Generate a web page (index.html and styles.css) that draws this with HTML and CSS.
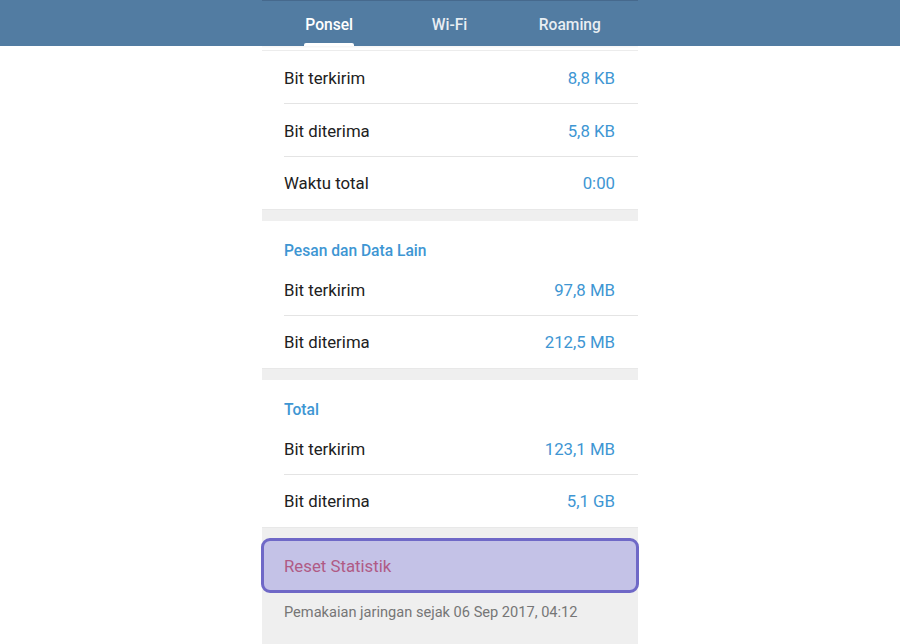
FILE: index.html
```html
<!DOCTYPE html>
<html lang="id">
<head>
<meta charset="utf-8">
<title>Penggunaan Data</title>
<link rel="stylesheet" href="styles.css">
</head>
<body>
<header class="topbar">
  <nav class="tabs">
    <div class="tab active"><span class="tab-label">Ponsel</span></div>
    <div class="tab"><span class="tab-label">Wi-Fi</span></div>
    <div class="tab"><span class="tab-label">Roaming</span></div>
  </nav>
</header>
<main class="column">
  <div class="top-edge"></div>
  <section class="group">
    <div class="row"><span class="label">Bit terkirim</span><span class="value">8,8 KB</span></div>
    <div class="row"><span class="label">Bit diterima</span><span class="value">5,8 KB</span></div>
    <div class="row last"><span class="label">Waktu total</span><span class="value">0:00</span></div>
  </section>
  <div class="gap"></div>
  <section class="group">
    <h2 class="group-title">Pesan dan Data Lain</h2>
    <div class="row"><span class="label">Bit terkirim</span><span class="value">97,8 MB</span></div>
    <div class="row last"><span class="label">Bit diterima</span><span class="value">212,5 MB</span></div>
  </section>
  <div class="gap"></div>
  <section class="group">
    <h2 class="group-title">Total</h2>
    <div class="row"><span class="label">Bit terkirim</span><span class="value">123,1 MB</span></div>
    <div class="row last"><span class="label">Bit diterima</span><span class="value">5,1 GB</span></div>
  </section>
  <section class="footer-area">
    <div class="reset">Reset Statistik</div>
    <p class="note">Pemakaian jaringan sejak 06 Sep 2017, 04:12</p>
  </section>
</main>
</body>
</html>
```
FILE: styles.css
```css
* { box-sizing: border-box; }
html, body { margin: 0; padding: 0; }
body {
  background: #ffffff;
  font-family: Roboto, "Noto Sans", "Liberation Sans", sans-serif;
  color: #212121;
}
.topbar {
  background: #527ca2;
  height: 46px;
}
.tabs {
  width: 376px;
  height: 46px;
  margin: 0 auto;
  border-top: 1px solid #46698d;
  display: flex;
  padding: 3px 8px 0 7px;
}
.tab {
  flex: 1;
  display: flex;
  justify-content: center;
  align-items: center;
  position: relative;
  font-size: 15.6px;
  font-weight: 500;
  color: rgba(255, 255, 255, 0.88);
}
.tab.active { color: #ffffff; }
.tab.active::after {
  content: "";
  position: absolute;
  bottom: 0;
  left: 50%;
  width: 50px;
  margin-left: -25px;
  height: 3px;
  background: #ffffff;
  border-radius: 2px 2px 0 0;
}
.column {
  width: 376px;
  margin: 0 auto;
  background: #ffffff;
}
.top-edge {
  height: 5px;
  background: linear-gradient(#f5f5f5, #ffffff 60%);
  border-bottom: 1px solid #ececec;
}
.group { background: #ffffff; }
.row {
  display: flex;
  justify-content: space-between;
  align-items: center;
  height: 53px;
  margin-left: 22px;
  padding: 2px 23px 0 0;
  border-bottom: 1px solid #e4e4e4;
  font-size: 16.8px;
}
.row.last {
  border-bottom: none;
  height: 52px;
  padding-top: 0;
}
.value { color: #3e96d3; }
.gap {
  height: 12px;
  background: #efefef;
  border-top: 1px solid #e8e8e8;
}
.group-title {
  margin: 0;
  padding: 21px 22px 3px;
  line-height: 18px;
  font-size: 15.6px;
  font-weight: 500;
  color: #3e96d3;
}
.footer-area {
  background: #efefef;
  border-top: 1px solid #e8e8e8;
  padding-top: 10px;
  padding-bottom: 40px;
}
.reset {
  margin: 0 -1px;
  height: 55px;
  display: flex;
  align-items: center;
  padding-left: 20px;
  border: 3px solid #6f68c7;
  border-radius: 9px;
  background: #c4c2e7;
  color: #b05a85;
  font-size: 16.8px;
}
.note {
  margin: 0;
  padding: 10px 22px 0;
  line-height: 18px;
  font-size: 14.6px;
  color: #767676;
}
```
